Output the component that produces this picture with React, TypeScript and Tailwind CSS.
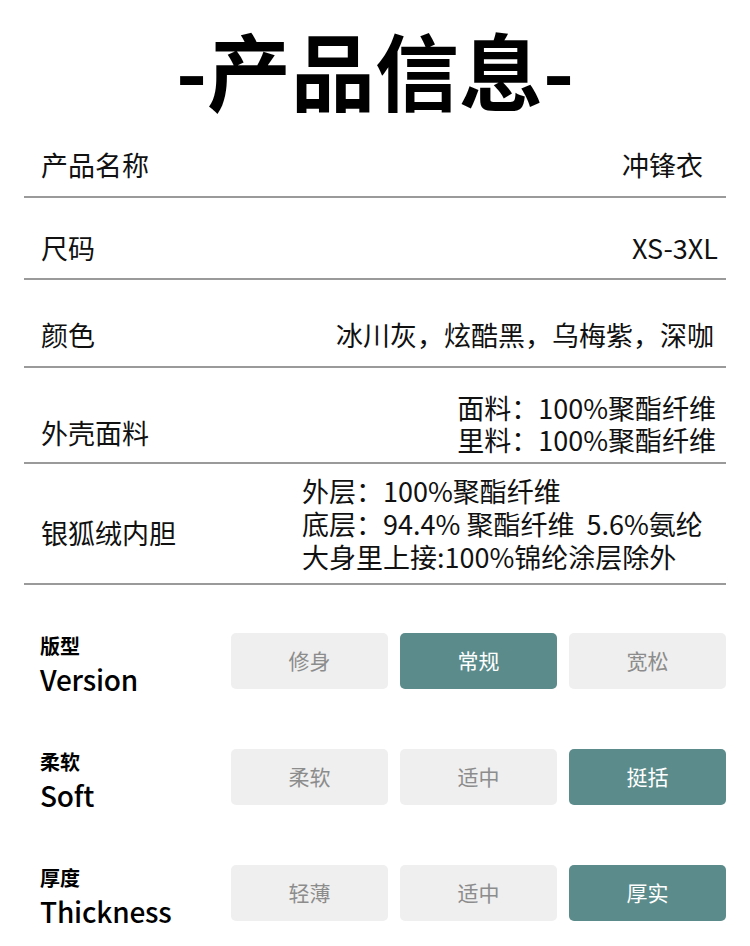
import React from "react";

const F = { fontFamily: '"Noto Sans CJK SC", "Noto Sans", sans-serif' };

function Opt({ cn, en, opts, active }: { cn: string; en: string; opts: string[]; active: number }) {
  return (
    <div className="flex items-center h-[56px]">
      <div className="w-[231px] pl-[40px] pt-[6px] flex flex-col text-black">
        <div className="text-[20px] leading-[30px] font-bold">{cn}</div>
        <div className="text-[28px] leading-[36px] font-medium tracking-[-0.2px]">{en}</div>
      </div>
      <div className="grid grid-cols-3 gap-[12px] w-[495px]">
        {opts.map((o, i) => (
          <div
            key={i}
            className={
              i === active
                ? "h-[56px] rounded-[5px] bg-[#5b8b8b] text-white flex items-center justify-center text-[21px]"
                : "h-[56px] rounded-[5px] bg-[#efefef] text-[#8c8c8c] flex items-center justify-center text-[21px]"
            }
          >
            {o}
          </div>
        ))}
      </div>
    </div>
  );
}

export default function App() {
  return (
    <div className="w-[750px] h-[946px] bg-white text-black overflow-hidden" style={F}>
      <div className="h-[130px] flex items-center justify-center pt-[8px]">
        <div className="text-[84px] leading-none font-bold">-产品信息-</div>
      </div>
      <div className="mx-[24px] text-[27px] leading-[34px] text-[#111]">
        <div className="h-[68px] flex justify-between items-end pb-[14px] px-[17px] border-b-2 border-[#9a9a9a]">
          <span>产品名称</span>
          <span className="mr-[6px]">冲锋衣</span>
        </div>
        <div className="h-[82px] flex justify-between items-end pb-[13px] pl-[17px] pr-[8px] border-b-2 border-[#9a9a9a]">
          <span>尺码</span>
          <span>XS-3XL</span>
        </div>
        <div className="h-[88px] flex justify-between items-end pb-[14px] pl-[17px] pr-[12px] border-b-2 border-[#9a9a9a]">
          <span>颜色</span>
          <span>冰川灰，炫酷黑，乌梅紫，深咖</span>
        </div>
        <div className="h-[96px] flex justify-between items-end pl-[17px] pr-[10px] border-b-2 border-[#9a9a9a]">
          <span className="pb-[12px]">外壳面料</span>
          <div className="pb-[6px] leading-[32px] text-right">
            <div>面料：100%聚酯纤维</div>
            <div>里料：100%聚酯纤维</div>
          </div>
        </div>
        <div className="h-[121px] flex items-center pl-[17px] border-b-2 border-[#9a9a9a]">
          <span className="w-[261px] pt-[18px]">银狐绒内胆</span>
          <div className="leading-[33px]">
            <div>外层：100%聚酯纤维</div>
            <div>底层：94.4% 聚酯纤维&nbsp;&nbsp;5.6%氨纶</div>
            <div>大身里上接:100%锦纶涂层除外</div>
          </div>
        </div>
      </div>
      <div className="flex flex-col mt-[48px] gap-[60px]">
        <Opt cn="版型" en="Version" opts={["修身", "常规", "宽松"]} active={1} />
        <Opt cn="柔软" en="Soft" opts={["柔软", "适中", "挺括"]} active={2} />
        <Opt cn="厚度" en="Thickness" opts={["轻薄", "适中", "厚实"]} active={2} />
      </div>
    </div>
  );
}
